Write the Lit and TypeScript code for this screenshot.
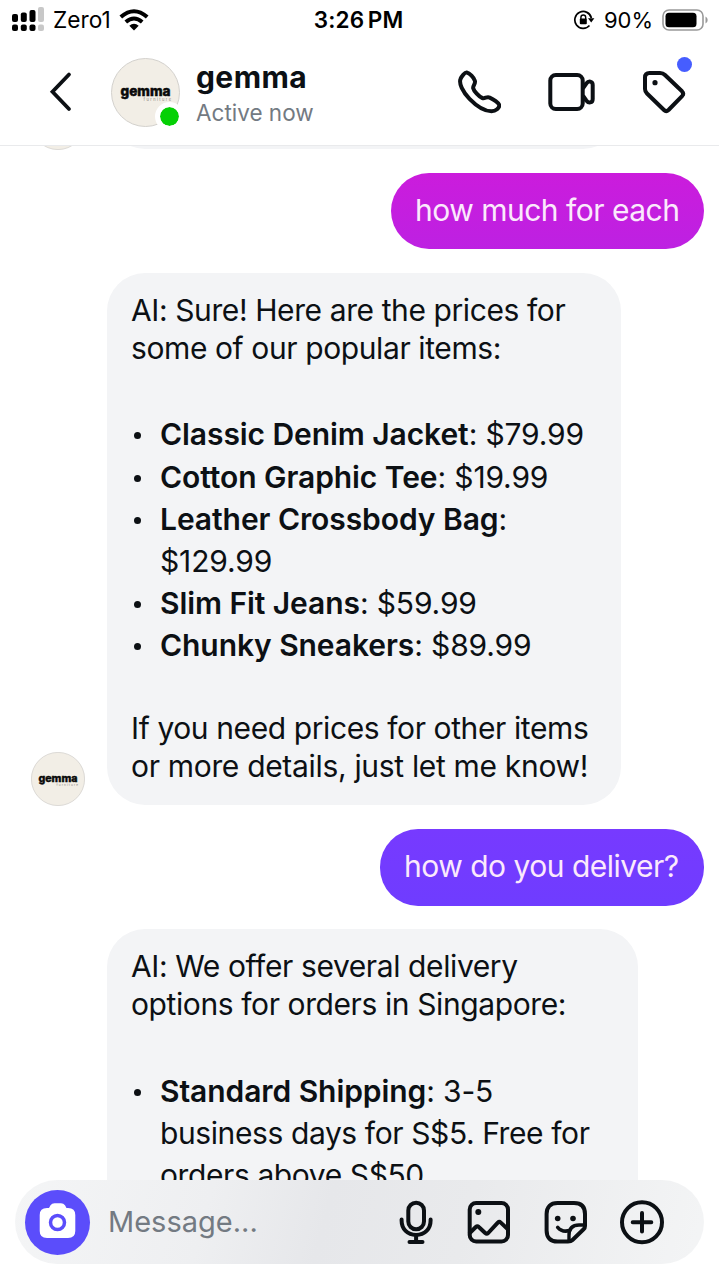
import { LitElement, html, css, svg } from "lit";
import { customElement, property } from "lit/decorators.js";

@customElement("gemma-avatar")
class GemmaAvatar extends LitElement {
  @property({ type: Boolean, reflect: true }) large = false;
  static styles = css`
    :host { display: block; width: 54px; height: 54px; flex: none; margin-bottom: -1px; }
    :host([large]) { width: 69px; height: 69px; margin-bottom: 0; }
    svg { display: block; width: 100%; height: 100%; }
    .logo { font: 800 14px Inter, sans-serif; }
    .sub { font: 400 4px Inter, sans-serif; }
  `;
  render() {
    return html`<svg viewBox="0 0 69 69">
      <circle cx="34.5" cy="34.5" r="34" fill="#f2eee6" stroke="#d3d1cd" />
      <text class="logo" x="9.5" y="37.7" textLength="50" lengthAdjust="spacingAndGlyphs" fill="#0a0a0a" stroke="#0a0a0a" stroke-width=".5">gemma</text>
      <text class="sub" x="32.5" y="43.4" textLength="27.5" fill="#8d8780">furniture</text>
    </svg>`;
  }
}

const icon = (x: unknown, w = 48) => html`<svg width=${w} height="48" viewBox="0 0 ${w} 48" fill="none" stroke="#0c1014" stroke-width="4" stroke-linecap="round" stroke-linejoin="round">${x}</svg>`;

@customElement("app-root")
export class AppRoot extends LitElement {
  static styles = css`
    :host { display: flex; flex-direction: column; width: 719px; height: 1280px; background: #fff; color: #0c1014; font-family: Inter, sans-serif; overflow: hidden; }
    svg { display: block; flex: none; }
    .status { height: 40px; flex: none; display: grid; grid-template-columns: 1fr auto 1fr; align-items: center; font-size: 22px; color: #000; padding: 0 11px 1px 12px; box-sizing: border-box; }
    .left, .right { display: flex; align-items: center; }
    .right { justify-content: flex-end; }
    .carrier { margin: 0 8px 0 9px; font-size: 22.7px; }
    .time { font-weight: 600; font-size: 22.5px; word-spacing: -2.5px; letter-spacing: 0.2px; margin-right: 3px; }
    .battery { margin: 0 9px; }
    .header { height: 106px; flex: none; box-sizing: border-box; border-bottom: 1px solid #e9eaec; display: flex; align-items: flex-start; padding: 18px 31px 0 47px; }
    .back { margin: 11px 38px 0 0; }
    .who { position: relative; }
    .online { position: absolute; left: 44px; top: 44px; width: 19px; height: 19px; border: 5px solid #fff; border-radius: 50%; background: #05d005; background-clip: padding-box; }
    .names { margin-left: 16px; flex: 1; }
    .name { font-size: 30px; font-weight: 700; line-height: 38px; letter-spacing: 0.4px; }
    .active { font-size: 22.5px; line-height: 34px; color: #737a82; }
    .actions { display: flex; gap: 45px; margin-top: 10px; }
    .tag { position: relative; }
    .dot { position: absolute; right: -4px; top: -11px; width: 15px; height: 15px; border-radius: 50%; background: #465dff; }
    .chat { height: 1034px; flex: none; overflow: hidden; display: flex; flex-direction: column; justify-content: flex-start; }
    .row { display: flex; align-items: flex-end; flex: none; margin-bottom: 24px; padding: 0 15px 0 31px; }
    .mine { justify-content: flex-end; }
    .peek { height: 3px; }
    .gap { margin-right: 22px; }
    .bubble { border-radius: 38px; box-sizing: border-box; font-size: 30px; line-height: 38.4px; letter-spacing: -0.4px; white-space: nowrap; padding: 17.6px 24px 19px; background: #f3f4f6; }
    .bubble p { margin: 0; }
    .sent { color: #fbe9fc; letter-spacing: -0.5px; }
    .pink { background: linear-gradient(#cb1cdc, #bd21e2); width: 313px; height: 76px; }
    .violet { background: linear-gradient(#773aff, #6f3cff); width: 324px; height: 77px; margin-bottom: -0.6px; }
    .prices { width: 514px; height: 532px; }
    .delivery { width: 531px; height: 560px; margin-left: 76px; }
    .prev { width: 514px; height: 80px; }
    .bubble ul { list-style: none; margin: 46px 0 42px; padding: 0; line-height: 42.2px; letter-spacing: -0.15px; }
    .bubble li { display: grid; grid-template-columns: 29px 1fr; }
    .bubble li::before { content: ""; width: 7px; height: 7px; border-radius: 50%; background: #0c1014; margin: 19px 0 0 2.5px; }
    .tight { letter-spacing: -0.4px; }
    .loose { letter-spacing: -0.32px; }
    b { font-weight: 600; letter-spacing: -0.07px; }
    .composer { height: 84px; margin: 0 15px; flex: none; box-sizing: border-box; border-radius: 42px; padding: 0 37px 0 10px; display: flex; align-items: center; background: linear-gradient(105deg, #f4f5f6 0%, #eeeff1 28%, #e6e7ea 45%, #e9eaec 65%, #f3f4f5 98%); }
    .camera { width: 65px; height: 65px; border-radius: 50%; background: #5b4dfb; }
    .placeholder { flex: 1; margin-left: 18px; font-size: 29px; color: #737a82; padding-bottom: 2px; }
    .tools { display: flex; gap: 28px; }
  `;
  render() {
    const tick = (x: number, y: number, h: number, c: string) => svg`<rect x=${x} y=${y} width="6" height=${h} rx="2" fill=${c} />`;
    return html`
      <div class="status">
        <div class="left">
          <svg width="32" height="26" viewBox="0 0 32 26">
            ${tick(0, 7, 8, "#000")}${tick(8.8, 5.5, 9.5, "#000")}${tick(17.5, 3, 12, "#000")}${tick(26, 0, 15, "#c8c8c8")}
            ${[0, 8.8, 17.5, 26].map((x, i) => tick(x, 17.5, 6.5, i === 3 ? "#c8c8c8" : "#000"))}
          </svg>
          <span class="carrier">Zero1</span>
          <svg width="30" height="22" viewBox="0 0 30 22" fill="none" stroke="#000" stroke-width="4">
            <path d="M1.8 8.1Q15-3.6 28.2 8.1" /><path d="M6.8 13Q15 6 23.2 13" /><path d="M10.3 16.7Q15 12.8 19.7 16.7L15 21.5Z" fill="#000" stroke="none" />
          </svg>
        </div>
        <div class="time">3:26 PM</div>
        <div class="right">
          <svg width="22" height="20" viewBox="0 0 22 20" fill="none" stroke="#000" stroke-width="1.7">
            <path d="M18.4 8A8.4 8.4 0 1 0 16.5 15.5" /><path d="M15 8.3h6.4l-3.2 4.2z" fill="#000" stroke="none" /><path d="M7.9 9V7.4a2.4 2.4 0 0 1 4.8 0V9" stroke-width="1.4" /><rect x="6.8" y="8.6" width="7" height="5.6" rx="1" fill="#000" stroke="none" />
          </svg>
          <span class="battery">90%</span>
          <svg width="46" height="22" viewBox="0 0 46 22"><rect x="1" y="1" width="40" height="20" rx="6" fill="none" stroke="#999" stroke-width="1.6" /><rect x="3.5" y="3.7" width="31" height="14.6" rx="3.5" /><path d="M43.5 7.5q2.2 1 2.2 3.5t-2.2 3.5z" fill="#999" /></svg>
        </div>
      </div>
      <div class="header">
        <svg class="back" width="26" height="46" viewBox="0 0 26 46" fill="none" stroke="#0c1014" stroke-width="3.8" stroke-linecap="round" stroke-linejoin="miter"><path d="M22 5.5L5.5 22.7L22 40" /></svg>
        <div class="who"><gemma-avatar large></gemma-avatar><span class="online"></span></div>
        <div class="names"><div class="name">gemma</div><div class="active">Active now</div></div>
        <div class="actions">
          ${icon(svg`<path d="M13.7 4.5C12 4.2 8.5 8 7.5 11C5.8 15.5 9.5 23.5 16.5 30.8C23.5 38 32 43.2 38.5 43.2C43 43.2 46.3 39.8 46.3 37.6C46.3 35 40 31 36.7 29.6C33.7 28.3 32 30.9 29.3 30C26 28.8 20.8 22.8 20.2 20.2C19.6 17.5 23 16 21.8 12.6C20.8 9.8 16.8 5 13.7 4.5Z" />`)}
          ${icon(svg`<rect x="4.3" y="7" width="32.4" height="34" rx="5.5" /><path d="M37.5 19.5L40.3 15.5C42.6 12.4 46.7 13 46.7 17V31C46.7 35 42.6 35.6 40.3 32.5L37.5 28.5" />`, 49)}
          <div class="tag">${icon(svg`<path d="M9.5 5H20C22.2 5 23.6 5.6 25 7L42 23.3C43.6 25 43.6 26.3 42.3 27.8L28.5 42C26.8 43.6 25.6 43.6 24 42L7 25.5C5.6 24.1 5 23 5 21V9.5C5 6.3 6.3 5 9.5 5Z" /><circle cx="15" cy="14.7" r="2.6" fill="#0c1014" stroke="none" />`)}<span class="dot"></span></div>
        </div>
      </div>
      <div class="chat">
        <div class="row peek"><gemma-avatar class="gap"></gemma-avatar><div class="bubble prev"></div></div>
        <div class="row mine"><div class="bubble sent pink">how much for each</div></div>
        <div class="row">
          <gemma-avatar class="gap"></gemma-avatar>
          <div class="bubble prices">
            <p>AI: Sure! Here are the prices for<br />some of our popular items:</p>
            <ul>
              <li><span><b>Classic Denim Jacket</b>: $79.99</span></li>
              <li><span><b>Cotton Graphic Tee</b>: $19.99</span></li>
              <li><span><b>Leather Crossbody Bag</b>:<br />$129.99</span></li>
              <li><span><b>Slim Fit Jeans</b>: $59.99</span></li>
              <li><span><b>Chunky Sneakers</b>: $89.99</span></li>
            </ul>
            <p>If you need prices for other items<br /><span class="loose">or more details, just let me know!</span></p>
          </div>
        </div>
        <div class="row mine"><div class="bubble sent violet">how do you deliver?</div></div>
        <div class="row">
          <div class="bubble delivery">
            <p>AI: We offer several delivery<br />options for orders in Singapore:</p>
            <ul><li><span><b>Standard Shipping</b>: 3-5<br /><span class="tight">business days for S$5. Free for<br />orders above S$50.</span></span></li></ul>
          </div>
        </div>
      </div>
      <div class="composer">
        <svg class="camera" viewBox="0 0 65 65"><path d="M24 18L25.5 15.3Q27 13.3 29.5 13.3H36Q38.5 13.3 40 15.3L41.5 18H43Q50.3 18 50.3 25V41Q50.3 48 43 48H22Q14.7 48 14.7 41V25Q14.7 18 22 18Z" fill="#fff" /><circle cx="32.5" cy="32.5" r="7" fill="none" stroke="#5b4dfb" stroke-width="3.5" /></svg>
        <div class="placeholder">Message...</div>
        <div class="tools">
          ${icon(svg`<rect x="17.3" y="4.7" width="15.7" height="26.6" rx="7.8" /><path d="M10.6 21.5V22.5C10.6 31 16.5 37 25.1 37S39.6 31 39.6 22.5V21.5M25.1 37V43M18.5 44H31.5" />`)}
          ${icon(svg`<rect x="2.7" y="5" width="38.3" height="38.5" rx="6.5" /><circle cx="11.3" cy="14" r="3" fill="#0c1014" stroke="none" /><path d="M3 34.7L8.8 29Q10.3 27.5 11.8 29L18.2 35Q19.7 36.3 21.2 35L30.8 24.6Q32.3 23.2 33.8 24.6L40.6 31" />`)}
          ${icon(svg`<path d="M25 43.5H14.5C7.5 43.5 3.6 39.8 3.6 32.5V16C3.6 8.8 7.5 5 14.5 5H31C38 5 42 8.8 42 16V28Q42 30 40.6 31.3L29.5 42Q28 43.5 25 43.5Z" /><path d="M26 43V37.5C26 30.5 29.5 27 36 27H41.5" stroke-width="3.4" /><path d="M14.7 29.3Q19 34.5 26.5 32.6" stroke-width="3.6" /><g fill="#0c1014" stroke="none"><circle cx="14.7" cy="20.5" r="2.8" /><circle cx="30" cy="20.5" r="2.8" /></g>`)}
          ${icon(svg`<circle cx="23" cy="24.2" r="20" /><path d="M23 14.9V33.5M13.7 24.2H32.3" />`)}
        </div>
      </div>
    `;
  }
}
